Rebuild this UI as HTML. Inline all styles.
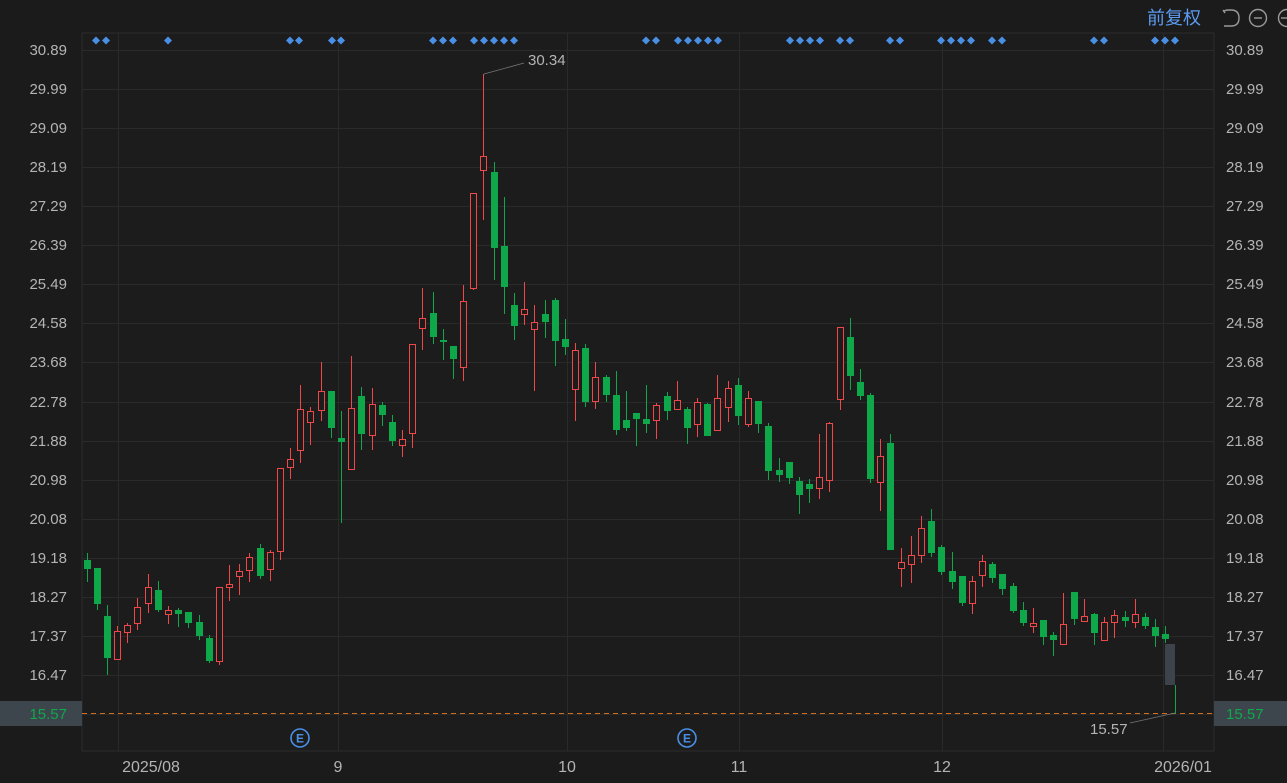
<!DOCTYPE html>
<html><head><meta charset="utf-8"><style>
html,body{margin:0;padding:0;background:#1b1b1b;}
body{width:1287px;height:783px;overflow:hidden;position:relative;font-family:"Liberation Sans","Noto Sans CJK SC",sans-serif;}
svg{position:absolute;left:0;top:0;}
</style></head><body>
<svg id="s" width="1287" height="783" xmlns="http://www.w3.org/2000/svg" font-family="Liberation Sans, Noto Sans CJK SC, sans-serif">
<rect x="0" y="0" width="1287" height="783" fill="#1b1b1b"/>
<rect x="82" y="33" width="1132" height="718" fill="#1c1c1c" stroke="#2b2b2b" stroke-width="1"/>
<g id="grid" stroke="#2a2a2a" stroke-width="1"></g>
<g id="lab" font-size="15" fill="#b4b4b4"></g>
<g id="cand"></g>
<g id="dia" fill="#4a8fe6"></g>
<line x1="82" y1="713.5" x2="1287" y2="713.5" stroke="#d0701f" stroke-dasharray="5,4" stroke-width="1"/>
<rect x="0" y="701" width="82" height="25" fill="#3d454d"/>
<rect x="1214" y="701" width="73" height="25" fill="#3d454d"/>
<text x="67" y="719" font-size="15" fill="#10a84c" text-anchor="end">15.57</text>
<text x="1226" y="719" font-size="15" fill="#10a84c">15.57</text>
<rect x="1165" y="644" width="10" height="41" fill="#3c434b"/>
<line x1="1175.5" y1="685" x2="1175.5" y2="714" stroke="#0ea84a"/>
<polyline points="484,74 524,63" fill="none" stroke="#777" stroke-width="0.8"/>
<text x="528" y="65" font-size="15" fill="#b4b4b4">30.34</text>
<polyline points="1130,723 1175,713" fill="none" stroke="#777" stroke-width="0.8"/>
<text x="1090" y="734" font-size="15" fill="#b4b4b4">15.57</text>
<g stroke="#4a8fe6" stroke-width="1.6" fill="none">
<circle cx="300" cy="738" r="9"/><circle cx="687" cy="738" r="9"/>
</g>
<g font-size="12" fill="#4a8fe6" font-weight="bold" text-anchor="middle">
<text x="300" y="742.5">E</text><text x="687" y="742.5">E</text>
</g>
<g font-size="16" fill="#b4b4b4" text-anchor="middle">
<text x="151" y="772">2025/08</text><text x="338" y="772">9</text><text x="567" y="772">10</text>
<text x="739" y="772">11</text><text x="942" y="772">12</text><text x="1183" y="772">2026/01</text>
</g>
<text x="1147" y="24" font-size="18" fill="#5b9bf0">前复权</text>
<g stroke="#9a9a9a" stroke-width="1.4" fill="none">
<path d="M1224,11 Q1226,10 1228,10 L1231,10 Q1239,10 1239,18 Q1239,26 1231,26 L1224,26"/>
<path d="M1223,10 L1225,13"/>
<circle cx="1258" cy="18" r="8.5"/><line x1="1254" y1="18" x2="1262" y2="18"/>
<circle cx="1287" cy="18" r="8.5"/><line x1="1281" y1="18" x2="1287" y2="18"/>
</g>
</svg>
<script>
var NS="http://www.w3.org/2000/svg";
function el(p,t,a,tx){var e=document.createElementNS(NS,t);for(var k in a)e.setAttribute(k,a[k]);if(tx)e.textContent=tx;document.getElementById(p).appendChild(e);}
var labs=["30.89","29.99","29.09","28.19","27.29","26.39","25.49","24.58","23.68","22.78","21.88","20.98","20.08","19.18","18.27","17.37","16.47"];
for(var i=0;i<18;i++){var y=50+i*39.06;el("grid","line",{x1:82,x2:1214,y1:Math.round(y)+0.5,y2:Math.round(y)+0.5});
if(i<17){el("lab","text",{x:67,y:Math.round(y)+5,"text-anchor":"end"},labs[i]);el("lab","text",{x:1226,y:Math.round(y)+5},labs[i]);}}
[118,338,567,739,942,1163].forEach(function(x){el("grid","line",{x1:x+0.5,x2:x+0.5,y1:33,y2:751});});
var C=[[87,553,560,569,582,0],[97,568,568,604,610,0],[107,605,616,658,675,0],[117,626,631,659,659,1],[127,623,625,632,643,1],[137,598,607,623,630,1],[148,574,587,603,613,1],[158,581,590,610,612,0],[168,606,610,614,624,1],[178,608,610,614,627,0],[188,612,612,623,628,0],[199,615,622,636,640,0],[209,635,638,661,663,0],[219,587,587,661,665,1],[229,565,584,587,601,1],[239,564,571,576,595,1],[249,553,557,570,582,1],[260,544,548,576,579,0],[270,550,552,569,581,1],[280,468,468,551,560,1],[290,448,459,467,479,1],[300,385,409,450,463,1],[310,407,411,422,445,1],[321,362,391,410,421,1],[331,391,391,428,438,0],
[341,411,438,442,523,0],[351,356,408,469,469,1],[361,387,396,434,450,0],[372,388,404,435,450,1],[382,402,405,415,426,0],[392,415,422,441,446,0],[402,430,439,445,457,1],[412,344,344,433,448,1],[422,288,318,328,350,1],[433,292,313,337,344,0],[443,329,340,342,360,0],[453,346,346,359,379,0],[463,285,301,367,381,1],[473,193,193,288,290,1],[483,74,156,170,220,1],[494,162,172,248,280,0],[504,197,246,287,314,0],[514,293,305,326,340,0],[524,282,309,314,325,1],[534,305,322,329,391,1],[545,300,314,322,338,0],[555,298,300,341,366,0],[565,319,339,347,355,0],[575,343,350,389,421,1],[585,344,348,402,407,0],[595,362,377,401,409,1],
[606,375,377,395,402,0],[616,371,395,430,435,0],[626,391,420,428,431,0],[636,413,413,419,446,0],[646,385,419,424,433,0],[656,403,405,420,439,1],[667,392,396,411,420,0],[677,381,400,409,409,1],[687,407,409,428,444,0],[697,398,402,424,437,1],[707,403,404,436,436,0],[717,375,398,430,430,1],[728,381,388,407,422,1],[738,378,385,416,425,0],[748,391,398,424,427,1],[758,401,401,424,433,0],[768,423,426,471,480,0],[779,458,470,475,482,0],[789,462,462,478,484,0],[799,477,481,495,514,0],[809,479,484,489,503,0],[819,434,477,488,499,1],[829,422,423,480,492,1],[840,327,327,399,410,1],[850,318,337,376,390,0],
[860,369,382,396,400,0],[870,393,395,479,483,0],[880,439,456,482,511,1],[890,434,443,550,550,0],[901,548,562,568,587,1],[911,536,555,564,583,1],[921,516,528,555,563,1],[931,509,521,553,557,0],[941,545,547,572,575,0],[952,552,571,582,589,0],[962,576,576,603,606,0],[972,576,581,603,614,1],[982,555,561,575,587,1],[992,562,564,578,583,0],[1002,574,574,589,595,0],[1013,583,586,611,613,0],[1023,602,610,623,626,0],[1033,608,623,626,633,1],[1043,620,620,637,645,0],[1053,632,635,640,656,0],[1063,593,624,644,644,1],[1074,592,592,619,625,0],[1084,599,616,621,622,1],[1094,613,614,633,645,0],[1104,617,622,640,640,1],[1114,610,615,622,638,1],[1125,611,617,621,627,0],[1135,599,614,622,628,1],[1145,613,617,626,629,0],[1155,619,627,636,647,0],[1165,626,634,639,643,0]];
C.forEach(function(c){var x=c[0],col=c[5]?"#f04848":"#0ea84a";
el("cand","line",{x1:x+0.5,x2:x+0.5,y1:c[1],y2:c[4],stroke:col,"stroke-width":1});
var h=Math.max(1,c[3]-c[2]);
if(c[5])el("cand","rect",{x:x-2.5,y:c[2]+0.5,width:6,height:h,fill:"#1c1c1c",stroke:col,"stroke-width":1});
else el("cand","rect",{x:x-3,y:c[2],width:7,height:h,fill:col});});
[96,106,168,290,299,332,341,433,443,453,474,484,494,504,514,646,656,678,688,698,708,718,790,800,810,820,840,850,890,900,941,951,961,971,992,1002,1094,1104,1155,1165,1175].forEach(function(x){
el("dia","path",{d:"M"+x+",36.5 L"+(x+4)+",40.5 L"+x+",44.5 L"+(x-4)+",40.5Z"});});
</script>
</body></html>
